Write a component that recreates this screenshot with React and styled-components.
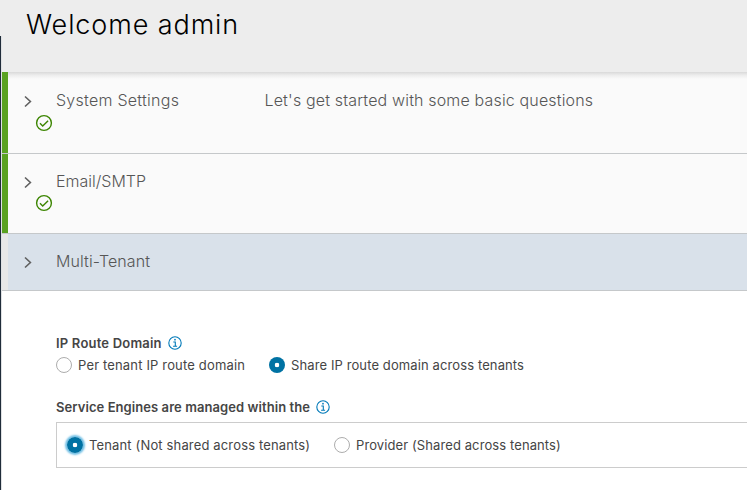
import React from 'react';
import styled, { createGlobalStyle } from 'styled-components';

const GlobalStyle = createGlobalStyle`
  *, *::before, *::after { box-sizing: border-box; }
  html, body { margin: 0; padding: 0; background: #fff; overflow: hidden; }
  body { font-family: Inter, "Open Sans", sans-serif; }
`;

const Page = styled.div`
  display: grid;
  grid-template-columns: 2px 1fr;
  width: 747px;
  height: 490px;
  overflow: hidden;
  background: #fff;
`;

const Edge = styled.div`
  margin-top: 36px;
  border-left: 1px solid #202c3a;
  background: #dfe1e3;
`;

const EdgeColumn = styled.div`
  display: grid;
  background: #ededed;
`;

const Main = styled.main`
  display: flex;
  flex-direction: column;
  min-width: 0;
`;

const Header = styled.header`
  flex: none;
  height: 72px;
  padding: 5px 0 0 24px;
  background: #ededed;
`;

const Title = styled.h1`
  margin: 0;
  font-size: 27px;
  line-height: 39px;
  font-weight: 300;
  color: #000;
  letter-spacing: ${p => p.$spacing}px;
  white-space: nowrap;
`;

const Step = styled.section`
  flex: none;
  display: grid;
  grid-template-columns: 48px 208.5px 1fr;
  height: ${p => p.$height}px;
  padding-top: ${p => p.$top}px;
  border-bottom: 1px solid #c5c8ca;
  background: linear-gradient(${p => (p.$done ? '#5aa220, #5aa220' : '#e8e8e8, #e8e8e8')}) left / 6px 100% no-repeat,
    ${p => (p.$shadow ? 'linear-gradient(#d9d9d9, #ececec 3px, #fafafa 7px)' : p.$active ? '#d9e1ea' : '#fafafa')};
  padding-left: 6px;
`;

const StepMarks = styled.div`
  display: flex;
  flex-direction: column;
  padding: 6px 0 0 14px;
  svg { display: block; flex: none; }
  svg + svg { margin: ${p => p.$gap}px 0 0 13px; }
`;

const StepText = styled.div`
  font-size: 16px;
  line-height: 22px;
  font-weight: 300;
  color: #565656;
  letter-spacing: ${p => p.$spacing}px;
  white-space: nowrap;
`;

const Form = styled.div`
  display: flex;
  flex-direction: column;
  padding: 42px 0 0 54px;
`;

const FieldLabel = styled.div`
  display: flex;
  align-items: center;
  gap: 6px;
  height: 20px;
  font-size: 13px;
  font-weight: 600;
  color: #454545;
  letter-spacing: ${p => p.$spacing}px;
  white-space: nowrap;
`;

const RadioRow = styled.div`
  display: flex;
  align-items: center;
  height: 24px;
  margin-bottom: 20px;
  gap: 24px;
`;

const RadioBox = styled(RadioRow)`
  height: 46px;
  margin: 5px 0 0;
  padding-left: 10px;
  border: 1px solid #ccc;
  border-right: 0;
`;

const Choice = styled.label`
  display: flex;
  align-items: center;
  gap: 6px;
  font-size: 13px;
  line-height: 20px;
  color: #454545;
  white-space: nowrap;
`;

const ChoiceText = styled.span`
  width: ${p => p.$width}px;
  letter-spacing: ${p => p.$spacing}px;
`;

const Radio = styled.span`
  width: 16px;
  height: 16px;
  flex: none;
  border-radius: 50%;
  border: ${p => (p.$checked ? 'none' : '1px solid #adadad')};
  background: ${p => (p.$checked ? 'radial-gradient(circle, #fff 0 2px, #0072a3 2.6px)' : '#fff')};
  box-shadow: ${p => (p.$focus ? '0 0 2px 2px #70bfe5' : 'none')};
`;

const Chevron = () => (
  <svg width="12" height="13" viewBox="0 0 12 13" fill="none" stroke="#606060" strokeWidth="1.6">
    <path d="M3 1.5 8.4 6.5 3 11.5" />
  </svg>
);

const Check = () => (
  <svg width="18" height="18" viewBox="0 0 18 18" fill="none" stroke="#3c8500" strokeWidth="1.4">
    <circle cx="9" cy="9" r="7.4" />
    <path d="m5 9.3 2.7 2.7 5.4-5.3" />
  </svg>
);

const Info = () => (
  <svg width="14" height="14" viewBox="0 0 14 14" fill="none" stroke="#0079b8" strokeWidth="1.1">
    <circle cx="7" cy="7" r="6.2" />
    <path d="M5.3 6h2v4.2M5.1 10.3h4" />
    <circle cx="7" cy="3.7" r=".85" fill="#0079b8" stroke="none" />
  </svg>
);

const Option = ({ text, width, spacing, checked, focus }) => (
  <Choice>
    <Radio $checked={checked} $focus={focus} />
    <ChoiceText $width={width} $spacing={spacing}>{text}</ChoiceText>
  </Choice>
);

export default function App() {
  return (
    <>
      <GlobalStyle />
      <Page>
        <EdgeColumn><Edge /></EdgeColumn>
        <Main>
          <Header><Title $spacing={0.9}>Welcome admin</Title></Header>
          <Step $height={82} $top={17} $done $shadow>
            <StepMarks $gap={6}><Chevron /><Check /></StepMarks>
            <StepText $spacing={0.26}>System Settings</StepText>
            <StepText $spacing={0.16}>Let's get started with some basic questions</StepText>
          </Step>
          <Step $height={80} $top={16} $done>
            <StepMarks $gap={5}><Chevron /><Check /></StepMarks>
            <StepText $spacing={0}>Email/SMTP</StepText>
          </Step>
          <Step $height={57} $top={16} $active>
            <StepMarks><Chevron /></StepMarks>
            <StepText $spacing={0.09}>Multi-Tenant</StepText>
          </Step>
          <Form>
            <FieldLabel $spacing={0.2}>IP Route Domain <Info /></FieldLabel>
            <RadioRow>
              <Option text="Per tenant IP route domain" width={167} spacing={0.16} />
              <Option text="Share IP route domain across tenants" width={233} spacing={0.11} checked />
            </RadioRow>
            <FieldLabel $spacing={0.07}>Service Engines are managed within the <Info /></FieldLabel>
            <RadioBox>
              <Option text="Tenant (Not shared across tenants)" width={221} spacing={0.15} checked focus />
              <Option text="Provider (Shared across tenants)" width={205} spacing={0.1} />
            </RadioBox>
          </Form>
        </Main>
      </Page>
    </>
  );
}
